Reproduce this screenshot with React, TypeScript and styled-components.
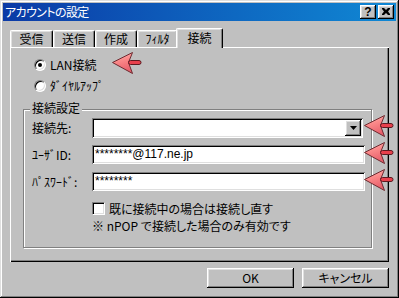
import React from "react";
import styled, { createGlobalStyle, css } from "styled-components";

const Global = createGlobalStyle`
  html, body { margin: 0; padding: 0; background: #c0c0c0; }
  body {
    font-family: "Noto Sans CJK JP", "Noto Sans", sans-serif;
    font-size: 12px;
    color: #000;
  }
  * { box-sizing: border-box; }
`;

const raised = css`
  box-shadow: inset -1px -1px #000, inset 1px 1px #fff, inset -2px -2px #808080,
    inset 2px 2px #dfdfdf;
`;
const sunken = css`
  box-shadow: inset 1px 1px #808080, inset -1px -1px #fff, inset 2px 2px #000,
    inset -2px -2px #dfdfdf;
`;

const Window = styled.div`
  position: relative;
  width: 399px;
  height: 298px;
  background: #c0c0c0;
  padding: 3px;
  display: flex;
  flex-direction: column;
  box-shadow: inset -1px -1px #000, inset 1px 1px #dfdfdf, inset -2px -2px #808080,
    inset 2px 2px #fff;
`;

const TitleBar = styled.div`
  height: 18px;
  display: flex;
  align-items: center;
  padding: 0 2px 0 2px;
  background: linear-gradient(to right, #0b3aa6, #1088d4);
`;

const Title = styled.div`
  flex: 1;
  color: #fff;
  font-size: 12px;
  line-height: 18px;
  letter-spacing: -0.6px;
  font-feature-settings: "palt";
  white-space: nowrap;
`;

const TitleButtons = styled.div`
  display: flex;
  gap: 2px;
`;

const TitleButton = styled.div`
  width: 16px;
  height: 14px;
  background: #c0c0c0;
  ${raised};
  display: flex;
  align-items: center;
  justify-content: center;
  font-family: "Liberation Sans", sans-serif;
  font-weight: bold;
  font-size: 12px;
  line-height: 14px;
  padding-bottom: 1px;
`;

const Body = styled.div`
  flex: 1;
  display: flex;
  flex-direction: column;
  padding: 7px 7px 0 7px;
`;

const TabStrip = styled.div`
  height: 19px;
  display: flex;
  align-items: flex-end;
  position: relative;
  z-index: 1;
`;

const Tab = styled.div<{ $active?: boolean; $w: number }>`
  width: ${(p) => p.$w + (p.$active ? 4 : 0)}px;
  height: ${(p) => (p.$active ? 20 : 17)}px;
  margin: ${(p) => (p.$active ? "0 -2px -1px -2px" : "0")};
  position: relative;
  z-index: ${(p) => (p.$active ? 2 : 1)};
  background: #c0c0c0;
  border-top: 1px solid #fff;
  border-left: 1px solid #fff;
  border-right: 1px solid #000;
  border-radius: 2px 2px 0 0;
  box-shadow: inset -1px 0 #808080, inset 1px 1px #dfdfdf;
  display: flex;
  align-items: center;
  justify-content: center;
  line-height: 14px;
  padding-bottom: ${(p) => (p.$active ? 2 : 0)}px;
`;

const Half = styled.span`
  font-feature-settings: normal;
  letter-spacing: 0;
`;

const Panel = styled.div`
  height: 215px;
  background: #c0c0c0;
  box-shadow: inset 1px 1px #fff, inset -1px -1px #000, inset -2px -2px #808080;
  padding: 11px 0 0 13px;
  display: flex;
  flex-direction: column;
`;

const RadioList = styled.div`
  margin-left: 11px;
  display: flex;
  flex-direction: column;
  gap: 8px;
`;

const RadioRow = styled.div`
  height: 13px;
  display: flex;
  align-items: center;
  gap: 4px;
  line-height: 13px;
`;

const Radio = styled.span<{ $checked?: boolean }>`
  width: 12px;
  height: 12px;
  border-radius: 50%;
  background: #fff;
  border: 1px solid;
  border-color: #808080 #fff #fff #808080;
  box-shadow: inset 1px 1px #000, inset -1px -1px #dfdfdf;
  position: relative;
  flex: none;
  &::after {
    content: "";
    display: ${(p) => (p.$checked ? "block" : "none")};
    position: absolute;
    left: 3px;
    top: 3px;
    width: 4px;
    height: 4px;
    border-radius: 50%;
    background: #000;
  }
`;

const Group = styled.div`
  position: relative;
  margin-top: 17px;
  width: 349px;
  height: 139px;
  border: 1px solid #808080;
  box-shadow: inset 1px 1px #fff, 1px 1px #fff;
  padding: 8px 0 0 8px;
`;

const Legend = styled.div`
  position: absolute;
  left: 6px;
  top: -9px;
  padding: 0 2px;
  background: #c0c0c0;
  line-height: 14px;
`;

const Form = styled.div`
  display: grid;
  grid-template-columns: 60px auto;
  grid-auto-rows: 20px;
  row-gap: 7px;
  align-items: start;
`;

const Label = styled.div`
  line-height: 20px;
  white-space: nowrap;
`;

const Combo = styled.div`
  width: 271px;
  height: 20px;
  background: #fff;
  ${sunken};
  display: flex;
  justify-content: flex-end;
  padding: 2px;
`;

const DropButton = styled.div`
  width: 16px;
  height: 16px;
  background: #c0c0c0;
  ${raised};
  display: flex;
  align-items: center;
  justify-content: center;
`;

const TextBox = styled.div`
  width: 273px;
  height: 19px;
  background: #fff;
  ${sunken};
  padding: 0 3px;
  line-height: 19px;
  font-family: "Liberation Sans", sans-serif;
  font-size: 12px;
  white-space: nowrap;
`;

const CheckRow = styled.div`
  margin: 10px 0 0 60px;
  height: 13px;
  display: flex;
  align-items: center;
  gap: 4px;
  line-height: 13px;
  font-feature-settings: "palt";
`;

const Checkbox = styled.span`
  width: 13px;
  height: 13px;
  background: #fff;
  border: 1px solid;
  border-color: #808080 #fff #fff #808080;
  box-shadow: inset 1px 1px #000, inset -1px -1px #dfdfdf;
  flex: none;
`;

const Note = styled.div`
  margin: 4px 0 0 60px;
  line-height: 13px;
  white-space: nowrap;
  font-feature-settings: "palt";
`;

const ButtonRow = styled.div`
  margin-top: 6px;
  display: flex;
  justify-content: flex-end;
  gap: 8px;
`;

const Button = styled.div`
  width: 87px;
  height: 20px;
  background: #c0c0c0;
  ${raised};
  display: flex;
  align-items: center;
  justify-content: center;
  line-height: 14px;
  font-feature-settings: "palt";
`;

const Pointer = styled.svg<{ $x: number; $y: number }>`
  position: absolute;
  left: ${(p) => p.$x}px;
  top: ${(p) => p.$y}px;
  overflow: visible;
`;

const Arrow = ({ x, y }: { x: number; y: number }) => (
  <Pointer $x={x} $y={y} width="30" height="22" viewBox="0 0 30 22">
    <defs>
      <linearGradient id={`g${x}${y}`} x1="0" y1="0" x2="0.3" y2="1">
        <stop offset="0" stopColor="#ffc0c0" />
        <stop offset="0.45" stopColor="#fb8a8a" />
        <stop offset="1" stopColor="#e8606c" />
      </linearGradient>
    </defs>
    <polygon
      points="0.5,10.5 20.5,0.5 16.5,10.5 20.5,21.5"
      fill={`url(#g${x}${y})`}
      stroke="#6e2a30"
      strokeWidth="1"
      strokeLinejoin="round"
    />
    <rect x="16.5" y="8.5" width="12.5" height="4" rx="2" fill="#e8404c" stroke="#5e1a20" strokeWidth="1" />
  </Pointer>
);

const tabs = [
  { label: "受信", w: 43 },
  { label: "送信", w: 42 },
  { label: "作成", w: 42 },
  { label: "ﾌｨﾙﾀ", w: 41 },
  { label: "接続", w: 43, active: true },
];

export default function App() {
  return (
    <>
      <Global />
      <Window>
        <TitleBar>
          <Title>アカウントの設定</Title>
          <TitleButtons>
            <TitleButton>?</TitleButton>
            <TitleButton>
              <svg width="8" height="7" viewBox="0 0 8 7">
                <path d="M0 0h2l2 2 2-2h2v1L6 3.5 8 6v1H6L4 5 2 7H0V6l2-2.5L0 1z" fill="#000" />
              </svg>
            </TitleButton>
          </TitleButtons>
        </TitleBar>
        <Body>
          <TabStrip>
            {tabs.map((t) => (
              <Tab key={t.label} $w={t.w} $active={t.active}>
                {t.label}
              </Tab>
            ))}
          </TabStrip>
          <Panel>
            <RadioList>
              <RadioRow>
                <Radio $checked />
                LAN接続
              </RadioRow>
              <RadioRow>
                <Radio />
                <Half>ﾀﾞｲﾔﾙｱｯﾌﾟ</Half>
              </RadioRow>
            </RadioList>
            <Group>
              <Legend>接続設定</Legend>
              <Form>
                <Label>接続先:</Label>
                <Combo>
                  <DropButton>
                    <svg width="7" height="4" viewBox="0 0 7 4">
                      <path d="M0 0h7L3.5 4z" fill="#000" />
                    </svg>
                  </DropButton>
                </Combo>
                <Label>
                  <Half>ﾕｰｻﾞID:</Half>
                </Label>
                <TextBox>********@117.ne.jp</TextBox>
                <Label>
                  <Half>ﾊﾟｽﾜｰﾄﾞ:</Half>
                </Label>
                <TextBox>********</TextBox>
              </Form>
              <CheckRow>
                <Checkbox />
                既に接続中の場合は接続し直す
              </CheckRow>
              <Note>※ nPOP で接続した場合のみ有効です</Note>
            </Group>
          </Panel>
          <ButtonRow>
            <Button>OK</Button>
            <Button>キャンセル</Button>
          </ButtonRow>
        </Body>
        <Arrow x={112} y={52} />
        <Arrow x={364} y={115} />
        <Arrow x={364} y={142} />
        <Arrow x={364} y={169} />
      </Window>
    </>
  );
}
